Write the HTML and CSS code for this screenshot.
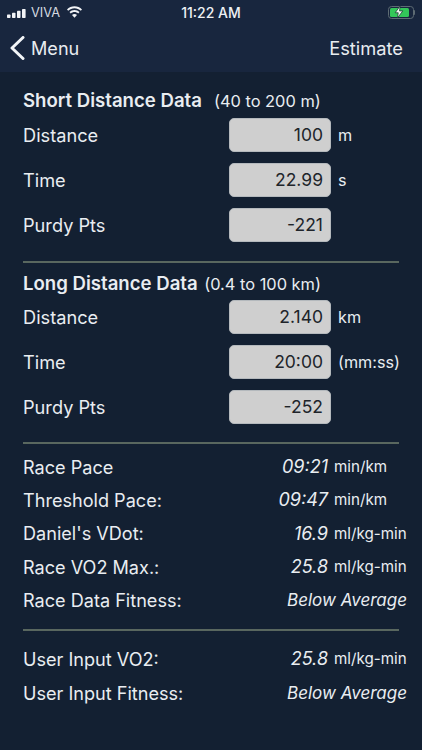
FILE: index.html
```html
<!DOCTYPE html>
<html lang="en">
<head>
<meta charset="utf-8">
<title>Estimate</title>
<link rel="stylesheet" href="styles.css">
</head>
<body>
<div class="top">
  <div class="status">
    <div class="status-left">
      <svg class="signal" width="19" height="9" viewBox="0 0 19 9"><rect x="0" y="5.500" width="3.500" height="3.500" rx=".7"/><rect x="5" y="3.800" width="3.500" height="5.200" rx=".7"/><rect x="10" y="1.800" width="3.500" height="7.200" rx=".7"/><rect x="15" y="0" width="3.600" height="9" rx=".7"/></svg>
      <span class="carrier">VIVA</span>
      <svg class="wifi" width="17" height="12" viewBox="0 0 17 12"><path d="M8.500 2.200c2.400 0 4.600.9 6.300 2.500l1.200-1.300C14 1.400 11.400.2 8.500.2S3 1.400 1 3.400l1.200 1.300C3.900 3.100 6.100 2.200 8.500 2.200z"/><path d="M8.500 5.900c1.400 0 2.700.5 3.700 1.500l1.300-1.300C12.200 4.800 10.400 4 8.500 4s-3.700.8-5 2.100l1.300 1.300c1-1 2.300-1.500 3.700-1.500z"/><path d="M8.500 11.700l2.500-2.600c-.6-.6-1.500-1-2.500-1s-1.900.4-2.500 1z"/></svg>
    </div>
    <span class="clock">11:22 AM</span>
    <div class="battery">
      <div class="battery-body"><div class="battery-fill"><svg width="10" height="12" viewBox="0 0 9 11"><path d="M5.500 0L1 6.200h2.800L3 11l5-6.500H5z"/></svg></div></div>
      <div class="battery-cap"></div>
    </div>
  </div>
  <div class="nav">
    <div class="back">
      <svg width="15" height="24" viewBox="0 0 15 24"><path d="M13 1.500L2 12l11 10.500" fill="none" stroke="#f2f5f8" stroke-width="3" stroke-linecap="round" stroke-linejoin="round"/></svg>
      <span>Menu</span>
    </div>
    <span class="estimate">Estimate</span>
  </div>
</div>
<main class="content">
  <section class="inputs">
    <h2 class="heading"><b>Short Distance Data</b><span class="range range-a">(40 to 200 m)</span></h2>
    <div class="field"><span class="label">Distance</span><span class="box">100</span><span class="unit">m</span></div>
    <div class="field"><span class="label">Time</span><span class="box">22.99</span><span class="unit">s</span></div>
    <div class="field"><span class="label">Purdy Pts</span><span class="box">-221</span></div>
  </section>
  <hr class="rule">
  <section class="inputs long">
    <h2 class="heading"><b>Long Distance Data</b><span class="range range-b">(0.4 to 100 km)</span></h2>
    <div class="field"><span class="label">Distance</span><span class="box">2.140</span><span class="unit">km</span></div>
    <div class="field"><span class="label">Time</span><span class="box">20:00</span><span class="unit">(mm:ss)</span></div>
    <div class="field"><span class="label">Purdy Pts</span><span class="box">-252</span></div>
  </section>
  <hr class="rule">
  <section class="results">
    <div class="res"><span class="label">Race Pace</span><i>09:21</i><span class="runit">min/km</span></div>
    <div class="res"><span class="label">Threshold Pace:</span><i>09:47</i><span class="runit">min/km</span></div>
    <div class="res"><span class="label">Daniel's VDot:</span><i>16.9</i><span class="runit">ml/kg-min</span></div>
    <div class="res"><span class="label">Race VO2 Max.:</span><i>25.8</i><span class="runit">ml/kg-min</span></div>
    <div class="res"><span class="label">Race Data Fitness:</span><i class="wide">Below Average</i></div>
  </section>
  <hr class="rule">
  <section class="results user">
    <div class="res"><span class="label">User Input VO2:</span><i>25.8</i><span class="runit">ml/kg-min</span></div>
    <div class="res"><span class="label">User Input Fitness:</span><i class="wide">Below Average</i></div>
  </section>
</main>
</body>
</html>
```
FILE: styles.css
```css
* { box-sizing: border-box; }
html, body { margin: 0; padding: 0; }
body {
  width: 422px;
  height: 750px;
  overflow: hidden;
  background: #132032;
  color: #e9edf1;
  font-family: Inter, "Liberation Sans", sans-serif;
}
.top { background: #18263e; height: 72px; }
.status {
  height: 24px;
  display: grid;
  grid-template-columns: 1fr auto 1fr;
  align-items: center;
  padding: 0 7px;
  font-size: 14px;
  color: #eef1f4;
}
.status-left { display: flex; align-items: center; gap: 5px; }
.signal { fill: #f2f4f7; margin-top: 2px; }
.wifi { fill: #f2f4f7; margin-left: 1px; }
.carrier { font-size: 12.800px; color: #d5dae0; }
.clock { font-weight: 500; }
.battery { justify-self: end; display: flex; align-items: center; }
.battery-body {
  width: 26px; height: 13px;
  border: 1.500px solid #5d6b73;
  border-radius: 3.500px;
  padding: 1px;
  display: flex;
}
.battery-fill {
  width: 19px;
  background: #33c759;
  border-radius: 1.500px;
  display: flex; align-items: center; justify-content: center;
}
.battery-fill svg { fill: #f4f8f4; stroke: #1d3a34; stroke-width: .7; flex: none; }
.battery-cap { width: 1.500px; height: 5px; background: #5d6b73; border-radius: 0 1px 1px 0; }
.nav {
  height: 48px;
  display: flex;
  justify-content: space-between;
  align-items: center;
  padding: 0 19px 0 10px;
  font-size: 18.100px;
  color: #e8ecf0;
}
.estimate { font-size: 18.300px; }
.back { display: flex; align-items: center; gap: 6px; }
.content { padding: 0 15px 0 23px; }
.heading {
  margin: 0;
  height: 40.500px;
  padding-top: 18px;
  font-size: 18.600px;
  font-weight: 400;
  line-height: 21px;
  display: flex;
  align-items: baseline;
  white-space: nowrap;
}
.heading b { font-weight: 600; }
.range { font-size: 16.400px; }
.range-a { margin-left: 12px; }
.range-b { margin-left: 6.500px; }
.long .heading { height: 32px; padding-top: 10.500px; }
.field {
  height: 45px;
  display: grid;
  grid-template-columns: 206px 102px auto;
  align-items: center;
  font-size: 18.200px;
}
.box {
  height: 34px;
  width: 102px;
  background: #cfcfcf;
  border: 1px solid #b4b9bd;
  border-radius: 5px;
  color: #20242a;
  font-size: 17.500px;
  line-height: 32px;
  text-align: right;
  padding-right: 7px;
}
.unit { font-size: 16.200px; padding-left: 7px; white-space: nowrap; }
.rule {
  margin: 0;
  width: 376px;
  height: 2px;
  border: 0;
  background: #59675f;
}
.inputs { padding-bottom: 13px; }
.inputs.long { padding-bottom: 12.500px; }
.results { padding-top: 6px; padding-bottom: 12.500px; }
.results.user { padding-top: 11px; }
.res {
  height: 33.300px;
  display: grid;
  grid-template-columns: 247px 58px auto;
  align-items: center;
  font-size: 18.100px;
  white-space: nowrap;
}
.user .res { height: 33.700px; }
.res i { font-size: 18px; text-align: right; }
.res i.wide { font-size: 17px; grid-column: 2 / 4; justify-self: end; }
.runit { font-size: 15.200px; padding-left: 6px; }
```
